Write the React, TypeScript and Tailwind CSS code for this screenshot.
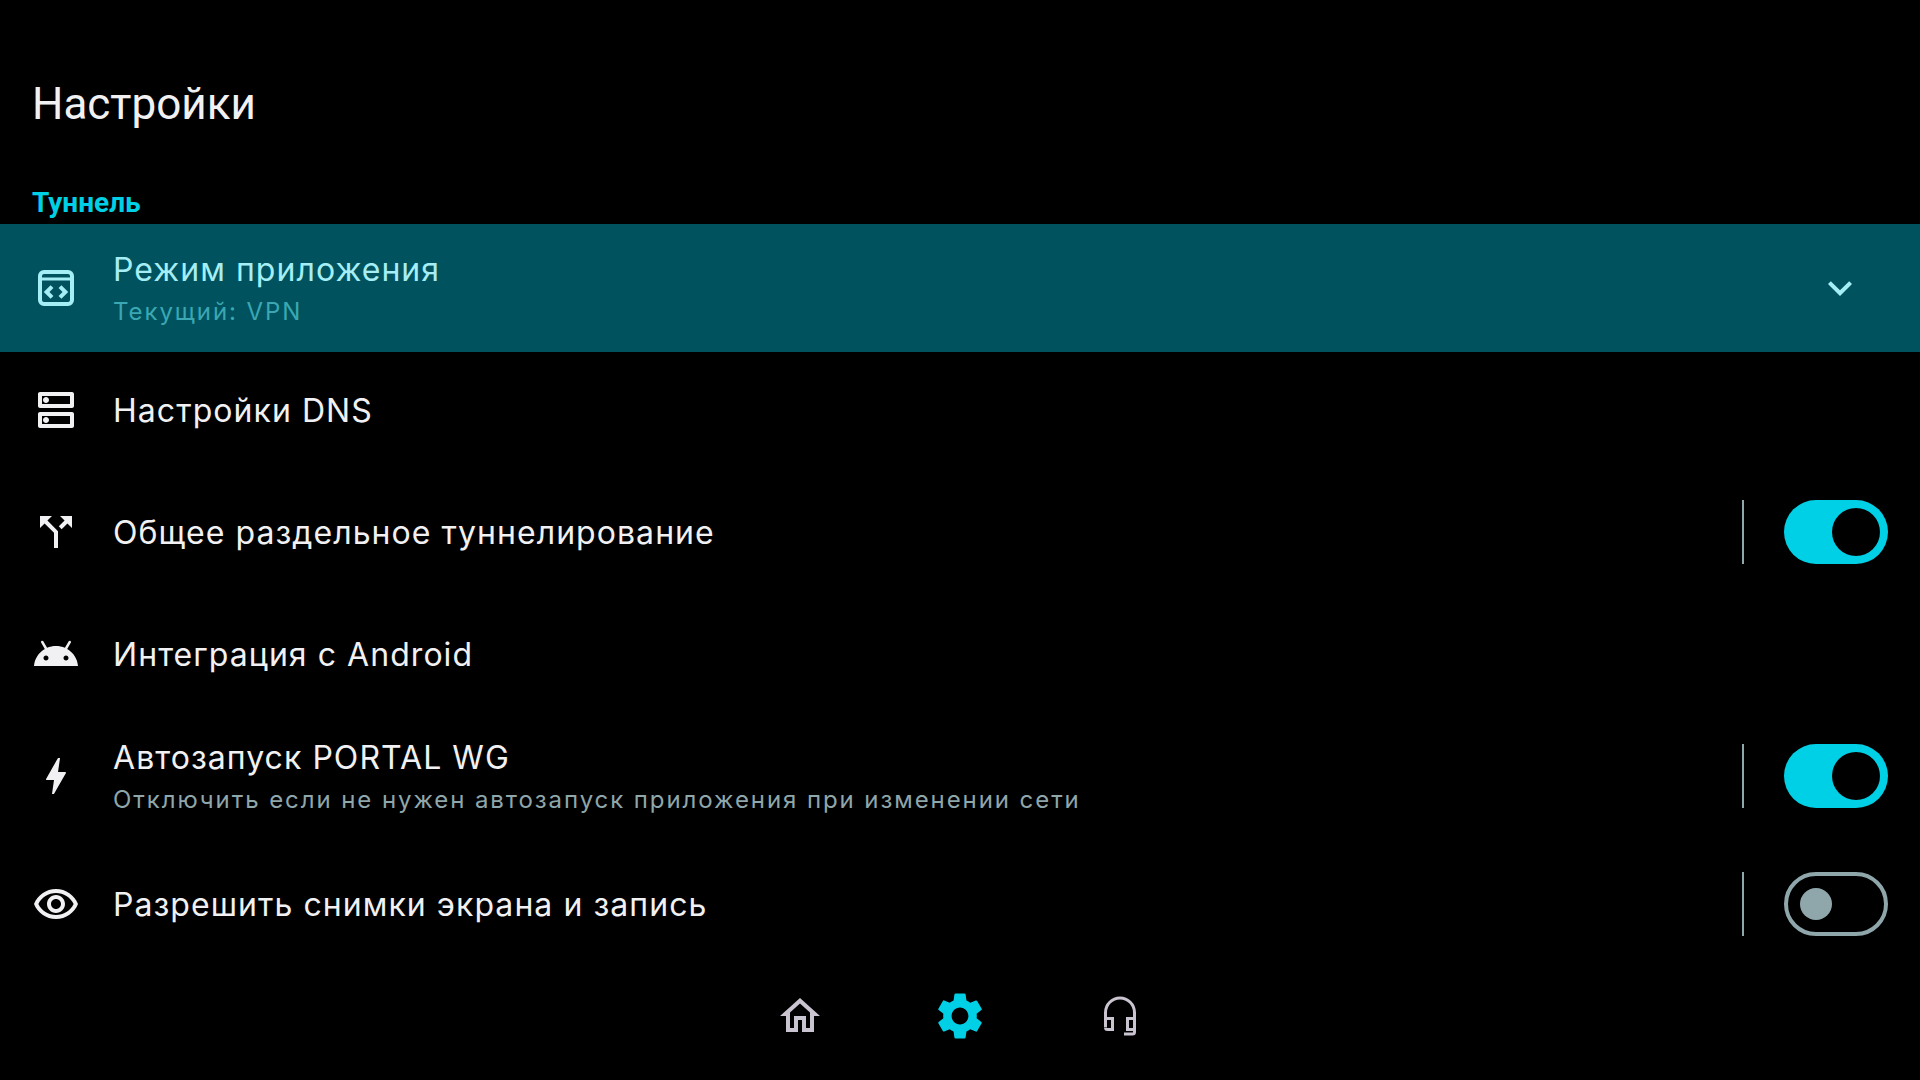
const SETTINGS_PATH =
  'M19.14 12.94c.04-.3.06-.61.06-.94 0-.32-.02-.64-.07-.94l2.03-1.58c.18-.14.23-.41.12-.61l-1.92-3.32c-.12-.22-.37-.29-.59-.22l-2.39.96c-.5-.38-1.03-.7-1.62-.94l-.36-2.54c-.04-.24-.24-.41-.48-.41h-3.84c-.24 0-.43.17-.47.41l-.36 2.54c-.59.24-1.13.57-1.62.94l-2.39-.96c-.22-.08-.47 0-.59.22L2.74 8.87c-.12.21-.08.47.12.61l2.03 1.58c-.05.3-.09.63-.09.94s.02.64.07.94l-2.03 1.58c-.18.14-.23.41-.12.61l1.92 3.32c.12.22.37.29.59.22l2.39-.96c.5.38 1.03.7 1.62.94l.36 2.54c.05.24.24.41.48.41h3.84c.24 0 .44-.17.47-.41l.36-2.54c.59-.24 1.13-.56 1.62-.94l2.39.96c.22.08.47 0 .59-.22l1.92-3.32c.12-.22.07-.47-.12-.61l-2.01-1.58zM12 15.6c-1.98 0-3.6-1.62-3.6-3.6s1.62-3.6 3.6-3.6 3.6 1.62 3.6 3.6-1.62 3.6-3.6 3.6z';

function Icon({ d, className = 'h-12 w-12 text-[#f1f1f4]' }: { d: string; className?: string }) {
  return (
    <svg viewBox="0 0 24 24" fill="currentColor" className={`shrink-0 ${className}`}>
      <path d={d} />
    </svg>
  );
}

function CodeWindowIcon() {
  return (
    <svg viewBox="0 0 24 24" fill="none" stroke="currentColor" className="h-12 w-12 shrink-0 text-[#a6eef6]">
      <rect x="4" y="4" width="16" height="16" rx="2" strokeWidth="2" />
      <path d="M4 7.500h16" strokeWidth="1.500" />
      <path d="M10 11.300l-2.700 2.700 2.700 2.700M14 11.300l2.700 2.700-2.700 2.700" strokeWidth="2" />
    </svg>
  );
}

function HeadsetIcon() {
  return (
    <svg viewBox="0 0 48 48" fill="none" stroke="#cac4d0" strokeWidth="3" className="h-12 w-12 shrink-0">
      <path d="M9.500 35V20.500a14.500 14.500 0 0 1 29 0V40a2 2 0 0 1-2 2H28" />
      <path d="M9.500 26.500h7v11h-5a2 2 0 0 1-2-2M38.500 26.500h-7v11h7" />
    </svg>
  );
}

function Toggle({ on }: { on: boolean }) {
  return (
    <div className="flex items-center gap-10">
      <div className="h-16 w-0.5 bg-[#8fa6aa]" />
      {on ? (
        <div className="flex h-16 w-[104px] items-center justify-end rounded-full bg-[#00d0e6] pr-2">
          <div className="h-12 w-12 rounded-full bg-black" />
        </div>
      ) : (
        <div className="flex h-16 w-[104px] items-center rounded-full border-4 border-[#8fa6aa] pl-3">
          <div className="h-8 w-8 rounded-full bg-[#8fa6aa]" />
        </div>
      )}
    </div>
  );
}

interface RowProps {
  icon: React.ReactNode;
  title: string;
  subtitle?: string;
  trailing?: React.ReactNode;
  heightClass: string;
}

function Row({ icon, title, subtitle, trailing, heightClass }: RowProps) {
  return (
    <div className={`flex items-center gap-[33px] px-8 ${heightClass}`}>
      {icon}
      <div className="flex-1 pt-0.5">
        <div className="text-[32px] leading-[40px] tracking-[1.05px] text-[#f1f1f4]">{title}</div>
        {subtitle && <div className="mt-1.5 text-[24px] leading-[32px] tracking-[1.92px] text-[#8fa6aa]">{subtitle}</div>}
      </div>
      {trailing}
    </div>
  );
}

export default function App() {
  return (
    <div className="flex h-[1080px] w-[1920px] flex-col overflow-hidden bg-black font-['Inter',sans-serif]">
      <h1 className="pl-8 pt-[78px] font-['Roboto',sans-serif] text-[44px] leading-[52px] text-[#f1f1f4]">Настройки</h1>
      <div className="pl-8 pt-[52px] font-['Roboto',sans-serif] text-[28px] font-bold leading-[42px] text-[#00d0e6]">Туннель</div>

      <div className="flex h-32 items-center gap-[33px] bg-[#00535e] pl-8 pr-14">
        <CodeWindowIcon />
        <div className="flex-1 pt-0.5">
          <div className="text-[32px] leading-[40px] tracking-[1.05px] text-[#a6eef6]">Режим приложения</div>
          <div className="mt-1.5 text-[24px] leading-[32px] tracking-[1.92px] text-[#3ba7b3]">Текущий: VPN</div>
        </div>
        <Icon d="M16.590 8.590L12 13.170 7.410 8.590 6 10l6 6 6-6z" className="h-12 w-12 text-[#a6eef6]" />
      </div>

      <Row
        heightClass="h-[116px]"
        icon={<Icon d="M19 15v4H5v-4h14m1-2H4c-.55 0-1 .45-1 1v6c0 .55.45 1 1 1h16c.55 0 1-.45 1-1v-6c0-.55-.45-1-1-1zM7 18.500c-.82 0-1.500-.67-1.500-1.500s.68-1.500 1.500-1.500 1.500.67 1.500 1.500-.67 1.500-1.500 1.500zM19 5v4H5V5h14m1-2H4c-.55 0-1 .45-1 1v6c0 .55.45 1 1 1h16c.55 0 1-.45 1-1V4c0-.55-.45-1-1-1zM7 8.500c-.82 0-1.500-.67-1.500-1.500S6.180 5.500 7 5.500s1.500.67 1.500 1.500S7.830 8.500 7 8.500z" />}
        title="Настройки DNS"
      />
      <Row
        heightClass="h-32"
        icon={<Icon d="M14 4l2.290 2.290-2.880 2.880 1.420 1.420 2.880-2.880L20 10V4zm-4 0H4v6l2.290-2.290 4.710 4.700V20h2v-8.410l-5.290-5.300z" />}
        title="Общее раздельное туннелирование"
        trailing={<Toggle on />}
      />
      <Row
        heightClass="h-[116px]"
        icon={<Icon d="M17.600 9.480l1.840-3.180c.16-.31.04-.69-.26-.85-.29-.15-.65-.06-.83.22l-1.880 3.240c-2.860-1.210-6.080-1.210-8.940 0L5.650 5.670c-.19-.29-.58-.38-.87-.2-.28.18-.37.54-.22.83L6.400 9.480C3.300 11.250 1.280 14.440 1 18h22c-.28-3.560-2.300-6.750-5.400-8.520zM7 15.250c-.69 0-1.250-.56-1.250-1.250s.56-1.250 1.250-1.250 1.250.56 1.250 1.250-.56 1.250-1.250 1.250zm10 0c-.69 0-1.250-.56-1.250-1.250s.56-1.250 1.250-1.250 1.250.56 1.250 1.250-.56 1.250-1.250 1.250z" />}
        title="Интеграция с Android"
      />
      <Row
        heightClass="h-32"
        icon={<Icon d="M11 21h-1l1-7H7.500c-.88 0-.33-.75-.31-.78C8.480 10.940 10.420 7.540 13.010 3h1l-1 7h3.510c.4 0 .62.19.4.66C12.970 17.550 11 21 11 21z" />}
        title="Автозапуск PORTAL WG"
        subtitle="Отключить если не нужен автозапуск приложения при изменении сети"
        trailing={<Toggle on />}
      />
      <Row
        heightClass="h-32"
        icon={<Icon d="M12 6.500c3.790 0 7.170 2.130 8.820 5.500-1.650 3.370-5.020 5.500-8.820 5.500S4.830 15.370 3.180 12C4.830 8.630 8.210 6.500 12 6.500m0-2C7 4.500 2.730 7.610 1 12c1.730 4.390 6 7.500 11 7.500s9.270-3.110 11-7.500c-1.730-4.390-6-7.500-11-7.500zm0 5c1.380 0 2.500 1.120 2.500 2.500s-1.120 2.500-2.500 2.500-2.500-1.120-2.500-2.500 1.120-2.500 2.500-2.500m0-2c-2.480 0-4.500 2.020-4.500 4.500s2.020 4.500 4.500 4.500 4.500-2.020 4.500-4.500-2.020-4.500-4.500-4.500z" />}
        title="Разрешить снимки экрана и запись"
        trailing={<Toggle on={false} />}
      />

      <nav className="flex items-center justify-center gap-[112px] pt-6">
        <Icon d="M12 5.690l5 4.500V18h-2v-6H9v6H7v-7.810l5-4.500M12 3L2 12h3v8h6v-6h2v6h6v-8h3L12 3z" className="h-12 w-12 text-[#cac4d0]" />
        <Icon d={SETTINGS_PATH} className="-m-1 h-14 w-14 text-[#00d0e6]" />
        <HeadsetIcon />
      </nav>
    </div>
  );
}
